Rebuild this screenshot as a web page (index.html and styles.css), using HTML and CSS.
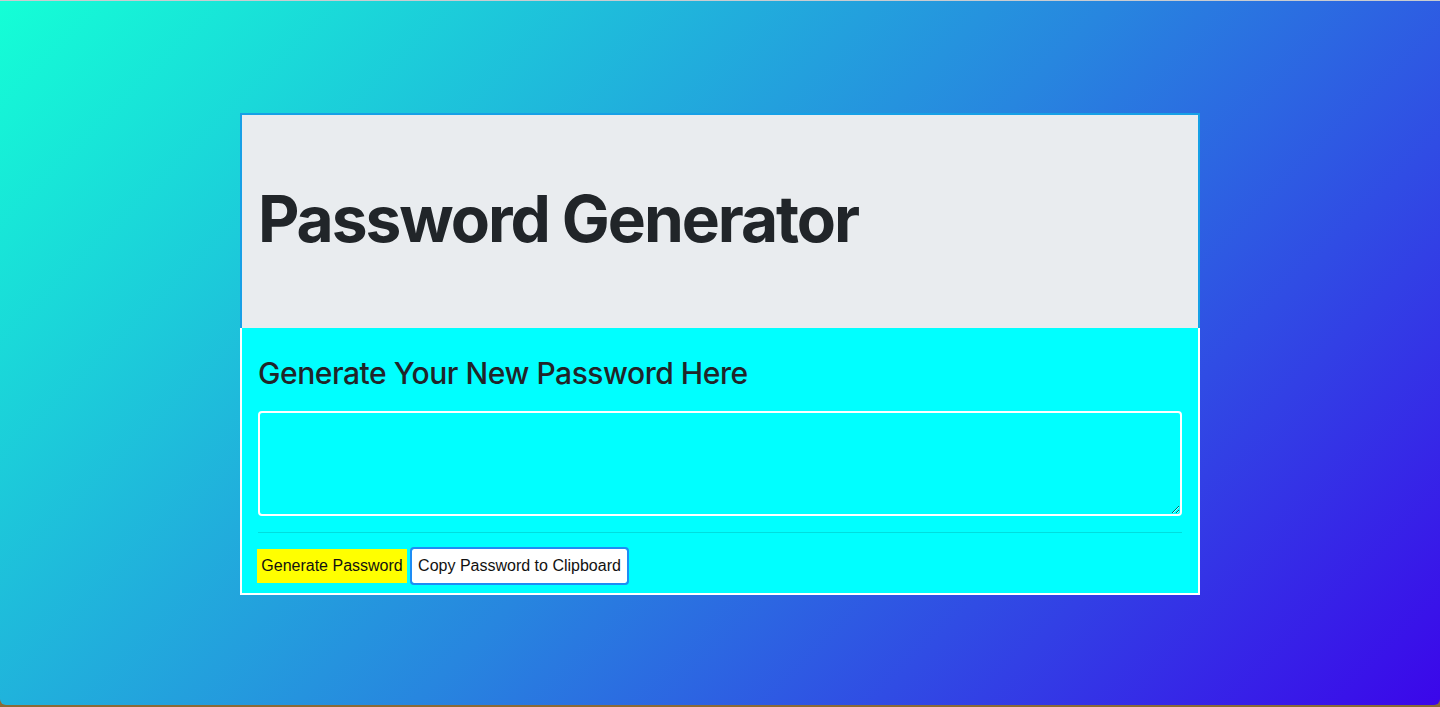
FILE: index.html
```html
<!DOCTYPE html>
<html lang="en">
<head>
<meta charset="utf-8">
<title>Password Generator</title>
<link rel="stylesheet" href="styles.css">
</head>
<body>
<div class="window">
  <main class="container">
    <header class="jumbotron">
      <h1 class="title">Password Generator</h1>
    </header>
    <section class="card">
      <h2 class="card-title">Generate Your New Password Here</h2>
      <textarea class="output" readonly aria-label="Generated Password"></textarea>
      <hr class="divider">
      <div class="actions">
        <button class="btn btn-generate" type="button">Generate Password</button>
        <button class="btn btn-copy" type="button">Copy Password to Clipboard</button>
      </div>
    </section>
  </main>
</div>
</body>
</html>
```
FILE: styles.css
```css
html, body {
  margin: 0;
  padding: 0;
  height: 707px;
  background: #8b6a36;
  overflow: hidden;
}
.window {
  height: 705px;
  box-sizing: border-box;
  border-top: 1px solid #c9ccd0;
  border-radius: 0 0 6px 6px;
  background: linear-gradient(135deg, #14ffd6 0%, #2786df 52%, #3b06ea 100%);
  padding-top: 112px;
  font-family: Inter, "Noto Sans", sans-serif;
  color: #212529;
}
.container {
  width: 960px;
  margin: 0 auto;
}
.jumbotron {
  height: 215px;
  box-sizing: border-box;
  background: #e9ecef;
  border: 2px solid #17a0e6;
  border-bottom: none;
  display: flex;
  align-items: center;
  padding: 0 16px;
}
.title {
  margin: 0;
  font-size: 64px;
  font-weight: 700;
  letter-spacing: -2.05px;
  line-height: 1.2;
  padding-bottom: 4px;
}
.card {
  background: #00ffff;
  border: 2px solid #ffffff;
  border-top: none;
  padding: 27px 16px 10px;
  display: flex;
  flex-direction: column;
}
.card-title {
  margin: 0 0 20px;
  font-size: 30px;
  font-weight: 500;
  line-height: 1.2;
  letter-spacing: -0.45px;
}
.output {
  display: block;
  height: 105px;
  box-sizing: border-box;
  border: 2px solid #ffffff;
  border-radius: 4px;
  background: transparent;
  margin: 0;
  resize: vertical;
  font: inherit;
}
.divider {
  margin: 16px 0;
  border: 0;
  border-top: 1px solid #00dede;
}
.actions {
  display: flex;
  align-items: center;
  gap: 3px;
  margin-left: -1px;
}
.btn {
  height: 34px;
  box-sizing: border-box;
  border: none;
  font-family: "Liberation Sans", Arial, sans-serif;
  font-size: 16px;
  color: #111;
  padding: 0 4px;
  margin: 0;
  white-space: nowrap;
}
.btn-generate {
  background: #ffff00;
  min-width: 150px;
}
.btn-copy {
  background: #ffffff;
  min-width: 215px;
  border-radius: 2px;
  outline: 2px solid #1e8cf5;
  outline-offset: 0;
  margin-left: 2px;
}
```
